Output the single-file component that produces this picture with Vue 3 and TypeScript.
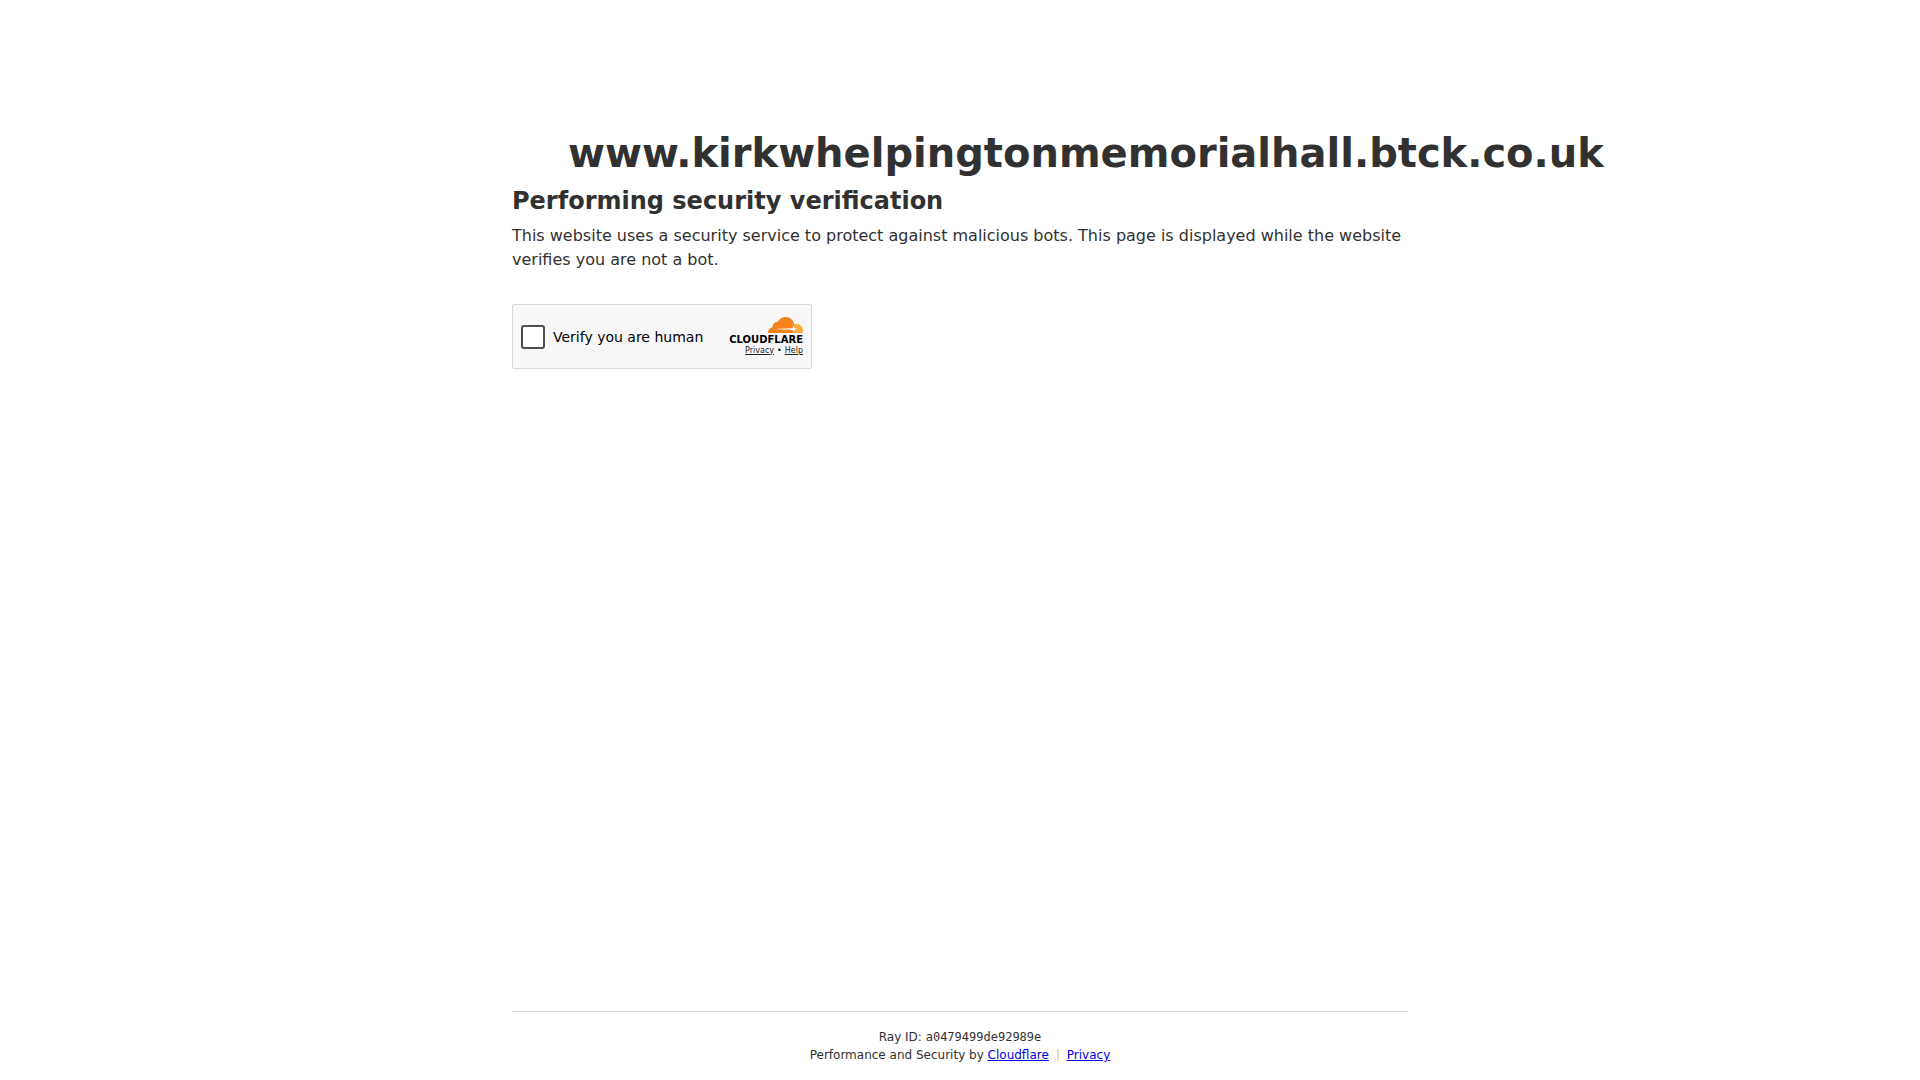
<script setup lang="ts">
import { ref } from 'vue'

const host = 'www.kirkwhelpingtonmemorialhall.btck.co.uk'
const rayId = 'a0479499de92989e'
const verified = ref(false)
</script>

<template>
  <div class="page">
    <main class="content">
      <div class="heading">
        <span class="favicon" aria-hidden="true"></span>
        <h1>{{ host }}</h1>
      </div>
      <h2>Performing security verification</h2>
      <p class="intro">
        This website uses a security service to protect against malicious bots. This page is displayed while the website
        verifies you are not a bot.
      </p>
      <div class="widget">
        <label class="check">
          <input v-model="verified" type="checkbox" />
          <span>Verify you are human</span>
        </label>
        <div class="brand">
          <svg class="cloud" viewBox="0 0 35 16" aria-hidden="true">
            <defs>
              <linearGradient id="streak" x1="0" x2="1">
                <stop offset="0" stop-color="#f9a458" />
                <stop offset="1" stop-color="#fff" />
              </linearGradient>
            </defs>
            <path
              fill="#fbad41"
              d="M25.5 7.6C26.3 7 27.2 6.7 28.2 6.7C32 6.7 35 10 35 13.6V16H24.5Z"
            />
            <path
              fill="#f6821f"
              d="M0 16C-.2 13 1.9 10.5 4.7 10.2C4 7 6.7 4.5 9.4 5.3C11.2 1.8 14.3 0 17.6 0C22 0 25.3 3 25.9 7.4L26.2 10L25.2 16Z"
            />
            <path fill="url(#streak)" d="M9 11.2H25V12.8H9Z" />
            <path fill="#fff" d="M25.7 8.4L26.5 11L29 12L26.5 13L25.7 15.6L24.6 13L23 12L24.6 11Z" />
          </svg>
          <span class="wordmark">CLOUDFLARE</span>
          <div class="terms">
            <a href="#privacy">Privacy</a><span class="dot">•</span><a href="#help">Help</a>
          </div>
        </div>
      </div>
    </main>
    <footer class="footer">
      <div class="footer-inner">
        <div>Ray ID: <code>{{ rayId }}</code></div>
        <div class="credits">
          <span>Performance and Security by <a href="#cloudflare">Cloudflare</a></span>
          <span class="divider"></span>
          <a href="#privacy-policy">Privacy</a>
        </div>
      </div>
    </footer>
  </div>
</template>

<style>
body {
  margin: 0;
  background: #fff;
}
</style>

<style scoped>
.page {
  display: flex;
  flex-direction: column;
  box-sizing: border-box;
  min-height: 100vh;
  overflow-x: hidden;
  color: #313131;
  font-family: 'DejaVu Sans', sans-serif;
  font-size: 16px;
  line-height: 24px;
}
.content,
.footer {
  box-sizing: border-box;
  width: 100%;
  max-width: 960px;
  margin: 0 auto;
  padding: 0 32px;
}
.content {
  flex: 1;
  padding-top: 128px;
}
.heading {
  display: flex;
  align-items: center;
  gap: 16px;
}
.favicon {
  flex: none;
  width: 40px;
  height: 40px;
}
h1 {
  margin: 0;
  font-size: 40px;
  line-height: 50px;
  font-weight: 700;
}
h2 {
  margin: 8px 0;
  font-size: 24px;
  line-height: 30px;
  font-weight: 700;
}
.intro {
  margin: 0 0 32px;
}
.widget {
  display: flex;
  align-items: center;
  justify-content: space-between;
  box-sizing: border-box;
  width: 300px;
  height: 65px;
  padding: 0 8px;
  border: 1px solid #d9d9d9;
  border-radius: 2px;
  background: #f7f7f7;
  color: #000;
}
.check {
  display: flex;
  align-items: center;
  gap: 8px;
  font-size: 14px;
  line-height: 24px;
  cursor: pointer;
}
.check input {
  appearance: none;
  box-sizing: border-box;
  width: 24px;
  height: 24px;
  margin: 0;
  border: 2px solid #4d4d4d;
  border-radius: 3px;
  background: #fff;
}
.check input:checked {
  background: #4d4d4d;
}
.brand {
  display: flex;
  flex-direction: column;
  align-items: flex-end;
  padding-bottom: 2px;
}
.cloud {
  display: block;
  width: 35px;
  height: 16px;
}
.wordmark {
  font-size: 10px;
  line-height: 14px;
  font-weight: 700;
}
.terms {
  display: flex;
  font-size: 8px;
  line-height: 8px;
}
.terms a {
  color: #232323;
}
.dot {
  margin: 0 3px;
}
.footer-inner {
  padding: 16px 0;
  border-top: 1px solid #d9d9d9;
  font-size: 12px;
  line-height: 18px;
  text-align: center;
}
code {
  font-family: 'DejaVu Sans Mono', monospace;
}
.credits {
  display: flex;
  justify-content: center;
  align-items: center;
}
.credits a {
  color: #00e;
}
.divider {
  width: 2px;
  height: 12px;
  margin: 0 8px;
  background: #d9d9d9;
}
</style>
